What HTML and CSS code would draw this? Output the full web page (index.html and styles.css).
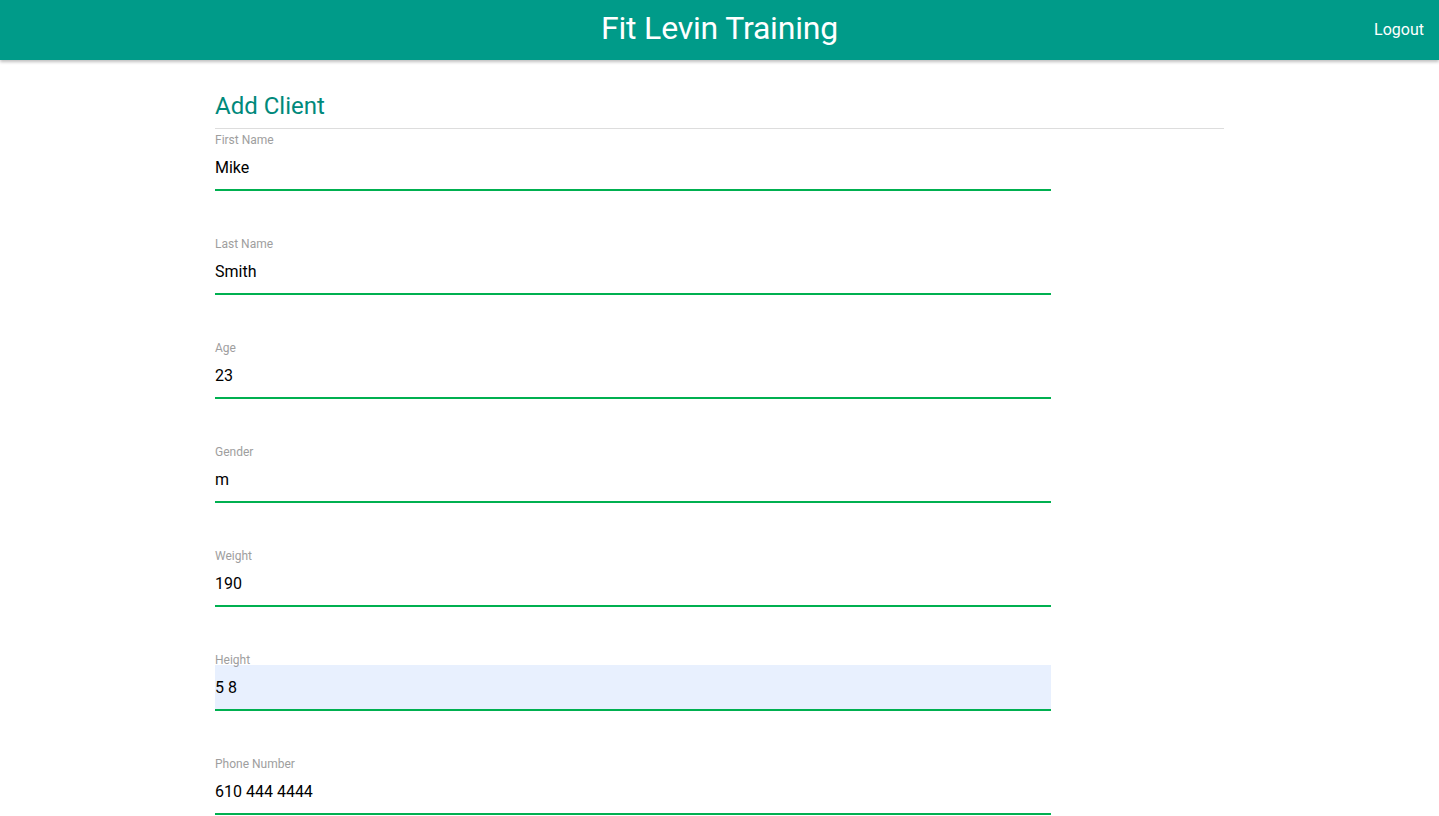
FILE: index.html
```html
<!DOCTYPE html>
<html>
<head>
<meta charset="utf-8">
<title>Fit Levin Training</title>
<link rel="stylesheet" href="styles.css">
</head>
<body>
<header class="nav">
  <div class="brand">Fit Levin Training</div>
  <a class="logout" href="#">Logout</a>
</header>
<main class="container">
  <h1 class="title">Add Client</h1>
  <hr class="rule">
  <form class="form">
    <div class="field"><label>First Name</label><div class="input">Mike</div></div>
    <div class="field"><label>Last Name</label><div class="input">Smith</div></div>
    <div class="field"><label>Age</label><div class="input">23</div></div>
    <div class="field"><label>Gender</label><div class="input">m</div></div>
    <div class="field"><label>Weight</label><div class="input">190</div></div>
    <div class="field"><label>Height</label><div class="input autofill">5 8</div></div>
    <div class="field"><label>Phone Number</label><div class="input">610 444 4444</div></div>
  </form>
</main>
</body>
</html>
```

FILE: styles.css
```css
html, body {
  margin: 0;
  padding: 0;
  background: #fff;
  font-family: Roboto, "Helvetica Neue", "Liberation Sans", Arial, sans-serif;
  overflow: hidden;
}
.nav {
  height: 60px;
  background: #009b89;
  box-shadow: 0 2px 3px rgba(0,0,0,0.25);
  display: flex;
  align-items: flex-start;
  justify-content: center;
  position: relative;
  z-index: 2;
}
.brand {
  color: #fff;
  font-size: 32px;
  line-height: 56px;
  letter-spacing: -0.2px;
}
.logout {
  position: absolute;
  right: 15px;
  top: 0;
  line-height: 60px;
  color: #fff;
  text-decoration: none;
  font-size: 16px;
}
.container {
  width: 1009px;
  margin: 0 auto;
}
.title {
  margin: 30px 0 0;
  font-size: 24px;
  line-height: 32px;
  font-weight: 400;
  color: #00897b;
}
.rule {
  margin: 6px 0 0;
  border: 0;
  border-top: 1px solid #dddddd;
  height: 0;
}
.form {
  padding-top: 5px;
}
.field {
  width: 836px;
  margin-bottom: 47px;
}
.field label {
  display: block;
  font-size: 12px;
  line-height: 13px;
  margin-bottom: -2px;
  color: #9e9e9e;
  position: relative;
  z-index: 1;
}
.input {
  height: 43px;
  padding-top: 1px;
  line-height: 44px;
  font-size: 16px;
  color: #000;
  border-bottom: 2px solid #00b050;
}
.input.wide {
  letter-spacing: 0.5px;
}
.autofill {
  background: #e8f0fe;
}
```
